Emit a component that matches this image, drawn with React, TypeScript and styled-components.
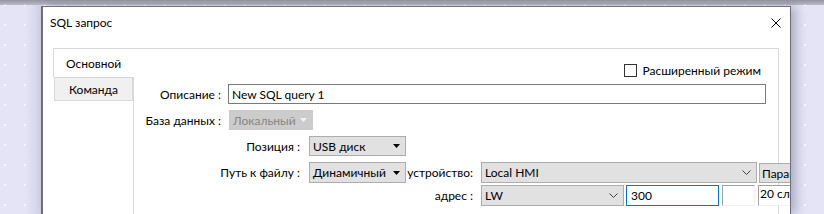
import React from 'react';
import styled, { createGlobalStyle } from 'styled-components';

const GlobalStyle = createGlobalStyle`
  html, body {
    margin: 0;
    padding: 0;
  }
  body {
    font-family: Lato, 'Noto Sans', 'Liberation Sans', sans-serif;
    font-size: 12px;
    color: #000;
  }
`;

const Desktop = styled.div`
  width: 824px;
  height: 214px;
  overflow: hidden;
  display: flex;
  flex-direction: column;
  background-color: #e4e4f6;
  background-image: radial-gradient(circle, rgba(255, 255, 255, 0.8) 0.6px, transparent 1.1px);
  background-size: 20px 20px;
  background-position: -5px -5px;
`;

const TopStrip = styled.div`
  height: 5px;
  flex-shrink: 0;
  background: linear-gradient(rgba(70, 70, 80, 0.5), rgba(90, 90, 100, 0.3));
`;

const Workspace = styled.div`
  flex: 1;
  display: flex;
  min-height: 0;
`;

const Gutter = styled.div`
  width: 41px;
  flex-shrink: 0;
  background: linear-gradient(to right, transparent 60%, rgba(110, 110, 150, 0.14));
`;

const Dialog = styled.div`
  width: 750px;
  flex-shrink: 0;
  margin-top: 1px;
  box-sizing: border-box;
  background: #fff;
  border-top: 1px solid #6f6f6f;
  border-left: 2px solid #6f6f6f;
  border-right: 1px solid #6c6c78;
  box-shadow: 5px 0 10px rgba(70, 70, 100, 0.35);
  display: flex;
  flex-direction: column;
  overflow: hidden;
`;

const TitleBar = styled.div`
  height: 31px;
  flex-shrink: 0;
  display: flex;
  align-items: center;
  justify-content: space-between;
  padding: 0 9px 0 7px;
`;

const Title = styled.span`
  font-size: 12px;
`;

const CloseIcon = () => (
  <svg width="10" height="10" viewBox="0 0 10 10">
    <path d="M0.5 0.5 L9.5 9.5 M9.5 0.5 L0.5 9.5" stroke="#000" strokeWidth="1" />
  </svg>
);

const Body = styled.div`
  flex: 1;
  display: flex;
  padding: 10px 11px 0 10px;
  min-height: 0;
  min-width: 0;
`;

const TabColumn = styled.div`
  width: 81px;
  flex-shrink: 0;
  display: flex;
  flex-direction: column;
`;

const SelectedTab = styled.div`
  height: 28px;
  border-top: 1px solid #d9d9d9;
  border-left: 1px solid #d9d9d9;
  background: #fff;
  padding-left: 12px;
  display: flex;
  align-items: center;
`;

const TabRest = styled.div`
  flex: 1;
  border-right: 1px solid #d9d9d9;
`;

const Tab = styled.div`
  width: 79px;
  height: 24px;
  box-sizing: border-box;
  margin-left: 1px;
  border: 1px solid #d9d9d9;
  background: #f0f0f0;
  display: flex;
  align-items: center;
  justify-content: center;
`;

const Pane = styled.div`
  flex: 1;
  min-width: 0;
  border-top: 1px solid #d9d9d9;
  border-right: 1px solid #d9d9d9;
  display: flex;
  flex-direction: column;
`;

const CheckRow = styled.label`
  margin-top: 13px;
  height: 16px;
  display: flex;
  align-items: center;
  justify-content: flex-end;
  padding-right: 17px;
  gap: 5px;
`;

const CheckBox = styled.span`
  width: 13px;
  height: 13px;
  box-sizing: border-box;
  border: 1px solid #333;
  background: #fff;
`;

const FormRow = styled.div<{ $top: number; $height: number }>`
  margin-top: ${({ $top }) => $top}px;
  height: ${({ $height }) => $height}px;
  display: flex;
  align-items: stretch;
  white-space: nowrap;
`;

const Label = styled.div<{ $width: number; $gap: number }>`
  width: ${({ $width }) => $width}px;
  margin-right: ${({ $gap }) => $gap}px;
  flex-shrink: 0;
  display: flex;
  align-items: center;
  justify-content: flex-end;
  padding-right: 1px;
  box-sizing: border-box;
`;

const TextField = styled.div<{ $width: number; $focused?: boolean }>`
  width: ${({ $width }) => $width}px;
  flex-shrink: 0;
  box-sizing: border-box;
  border: 1px solid ${({ $focused }) => ($focused ? '#0078d7' : '#7a7a7a')};
  background: #fff;
  display: flex;
  align-items: center;
  padding-left: ${({ $focused }) => ($focused ? 4 : 3)}px;
  margin-left: ${({ $focused }) => ($focused ? 2 : 0)}px;
`;

const Combo = styled.div<{ $width: number; $disabled?: boolean }>`
  width: ${({ $width }) => $width}px;
  flex-shrink: 0;
  box-sizing: border-box;
  border: 1px solid ${({ $disabled }) => ($disabled ? '#cccccc' : '#adadad')};
  background: ${({ $disabled }) => ($disabled ? '#cccccc' : '#e1e1e1')};
  color: ${({ $disabled }) => ($disabled ? '#868686' : '#000')};
  display: flex;
  align-items: center;
  justify-content: space-between;
  padding: 0 5px 0 3px;
  overflow: hidden;
`;

const Button = styled.div`
  width: 72px;
  flex-shrink: 0;
  box-sizing: border-box;
  border: 1px solid #adadad;
  background: #e1e1e1;
  display: flex;
  align-items: center;
  padding-left: 2px;
  margin-left: 2px;
  margin-top: 1px;
`;

const Sunken = styled.div<{ $width: number }>`
  width: ${({ $width }) => $width}px;
  flex-shrink: 0;
  box-sizing: border-box;
  border-top: 1px solid #a0a0a0;
  border-left: 1px solid #a0a0a0;
  border-right: 1px solid #f0f0f0;
  border-bottom: 1px solid #f0f0f0;
  background: #fff;
  margin-left: 3px;
  padding-left: 1px;
  line-height: 16px;
`;

const Triangle = ({ color }: { color: string }) => (
  <svg width="7" height="4" viewBox="0 0 7 4">
    <polygon points="0,0 7,0 3.5,4" fill={color} />
  </svg>
);

const Chevron = () => (
  <svg width="9" height="5" viewBox="0 0 9 5">
    <polyline points="0.5,0.5 4.5,4.5 8.5,0.5" fill="none" stroke="#444" strokeWidth="1" />
  </svg>
);

export default function App() {
  return (
    <>
      <GlobalStyle />
      <Desktop>
        <TopStrip />
        <Workspace>
          <Gutter />
          <Dialog>
            <TitleBar>
              <Title>SQL запрос</Title>
              <CloseIcon />
            </TitleBar>
            <Body>
              <TabColumn>
                <SelectedTab>Основной</SelectedTab>
                <TabRest>
                  <Tab>Команда</Tab>
                </TabRest>
              </TabColumn>
              <Pane>
                <CheckRow>
                  <CheckBox />
                  <span>Расширенный режим</span>
                </CheckRow>
                <FormRow $top={6} $height={20}>
                  <Label $width={88} $gap={6}>Описание :</Label>
                  <TextField $width={538}>New SQL query 1</TextField>
                </FormRow>
                <FormRow $top={6} $height={20}>
                  <Label $width={88} $gap={7}>База данных :</Label>
                  <Combo $width={84} $disabled>
                    <span>Локальный</span>
                    <Triangle color="#f2f2f2" />
                  </Combo>
                </FormRow>
                <FormRow $top={6} $height={20}>
                  <Label $width={167} $gap={8}>Позиция :</Label>
                  <Combo $width={97}>
                    <span>USB диск</span>
                    <Triangle color="#000" />
                  </Combo>
                </FormRow>
                <FormRow $top={6} $height={21}>
                  <Label $width={167} $gap={8}>Путь к файлу :</Label>
                  <Combo $width={97}>
                    <span>Динамичный</span>
                    <Triangle color="#000" />
                  </Combo>
                  <Label $width={68} $gap={7}>устройство:</Label>
                  <Combo $width={276}>
                    <span>Local HMI</span>
                    <Chevron />
                  </Combo>
                  <Button>Параметры</Button>
                </FormRow>
                <FormRow $top={2} $height={21}>
                  <Label $width={340} $gap={7}>адрес :</Label>
                  <Combo $width={143}>
                    <span>LW</span>
                    <Chevron />
                  </Combo>
                  <TextField $width={93} $focused>
                    300
                  </TextField>
                  <Sunken $width={33} />
                  <Sunken $width={60}>20 слов</Sunken>
                </FormRow>
              </Pane>
            </Body>
          </Dialog>
        </Workspace>
      </Desktop>
    </>
  );
}
